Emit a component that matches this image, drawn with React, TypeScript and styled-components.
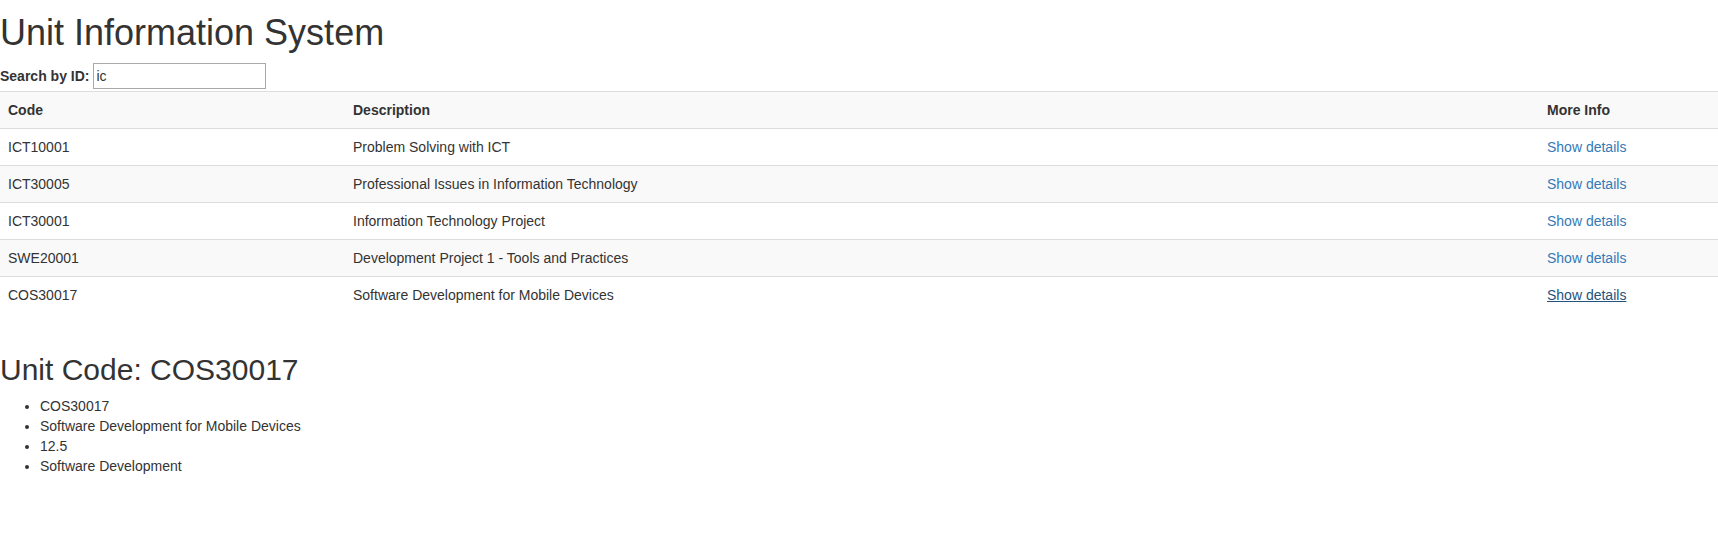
import React from "react";
import styled, { createGlobalStyle } from "styled-components";

const GlobalStyle = createGlobalStyle`
  *, *::before, *::after { box-sizing: border-box; }
  html, body { margin: 0; padding: 0; background: #fff; }
  body {
    font-family: "Liberation Sans", Arial, Helvetica, sans-serif;
    font-size: 14px;
    line-height: 1.42857143;
    color: #333;
  }
`;

const Page = styled.div`
  width: 1718px;
`;

const Title = styled.h1`
  font-size: 36px;
  font-weight: 500;
  line-height: 1.1;
  margin: 13px 0 10px;
  color: #333;
`;

const SearchRow = styled.div`
  height: 28px;
  display: flex;
  align-items: baseline;
`;

const Label = styled.label`
  font-weight: bold;
  line-height: 20px;
  margin-right: 4px;
`;

const SearchInput = styled.input`
  width: 173px;
  height: 26px;
  padding: 0 2px;
  border: 1px solid #a9a9a9;
  font-family: inherit;
  font-size: 14px;
  line-height: 20px;
  color: #333;
  outline: none;
`;

const Table = styled.table`
  width: 100%;
  border-collapse: collapse;
  border-spacing: 0;
  table-layout: fixed;
  margin-bottom: 40px;
`;

const Row = styled.tr<{ $striped?: boolean }>`
  background: ${(p) => (p.$striped ? "#f9f9f9" : "transparent")};
`;

const HeadCell = styled.th<{ $w?: number }>`
  text-align: left;
  font-weight: bold;
  padding: 8px;
  line-height: 20px;
  border-top: 1px solid #ddd;
  vertical-align: top;
  width: ${(p) => (p.$w ? `${p.$w}px` : "auto")};
`;

const Cell = styled.td`
  padding: 8px;
  line-height: 20px;
  border-top: 1px solid #ddd;
  vertical-align: top;
`;

const DetailLink = styled.a<{ $active?: boolean }>`
  color: ${(p) => (p.$active ? "#23527c" : "#337ab7")};
  text-decoration: ${(p) => (p.$active ? "underline" : "none")};
  cursor: pointer;
`;

const SubTitle = styled.h2`
  font-size: 30px;
  font-weight: 500;
  line-height: 1.1;
  margin: 0 0 10px;
  color: #333;
`;

const InfoList = styled.ul`
  margin: 0 0 10px;
  padding-left: 40px;
  line-height: 20px;
`;

const units = [
  { code: "ICT10001", desc: "Problem Solving with ICT" },
  { code: "ICT30005", desc: "Professional Issues in Information Technology" },
  { code: "ICT30001", desc: "Information Technology Project" },
  { code: "SWE20001", desc: "Development Project 1 - Tools and Practices" },
  { code: "COS30017", desc: "Software Development for Mobile Devices" },
];

export default function App() {
  return (
    <Page>
      <GlobalStyle />
      <Title>Unit Information System</Title>
      <SearchRow>
        <Label htmlFor="search">Search by ID:</Label>
        <SearchInput id="search" defaultValue="ic" />
      </SearchRow>
      <Table>
        <tbody>
          <Row $striped>
            <HeadCell $w={345}>Code</HeadCell>
            <HeadCell $w={1194}>Description</HeadCell>
            <HeadCell>More Info</HeadCell>
          </Row>
          {units.map((u, i) => (
            <Row key={u.code} $striped={i % 2 === 1}>
              <Cell>{u.code}</Cell>
              <Cell>{u.desc}</Cell>
              <Cell>
                <DetailLink $active={i === units.length - 1}>Show details</DetailLink>
              </Cell>
            </Row>
          ))}
        </tbody>
      </Table>
      <SubTitle>Unit Code: COS30017</SubTitle>
      <InfoList>
        <li>COS30017</li>
        <li>Software Development for Mobile Devices</li>
        <li>12.5</li>
        <li>Software Development</li>
      </InfoList>
    </Page>
  );
}
